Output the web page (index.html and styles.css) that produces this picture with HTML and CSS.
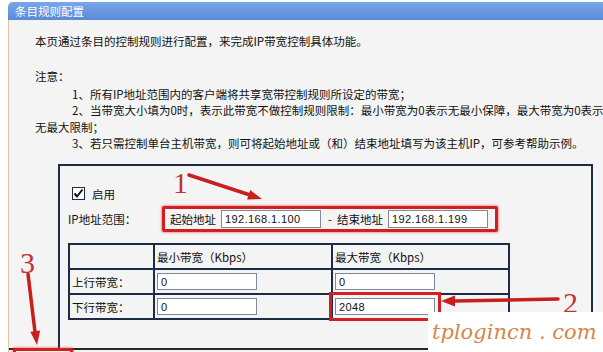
FILE: index.html
```html
<!DOCTYPE html>
<html lang="zh-CN">
<head>
    <meta charset="UTF-8">
    <title>条目规则配置</title>
    <link rel="stylesheet" href="styles.css">
</head>
<body>
    <div class="panel">
        <div class="panel-title">条目规则配置</div>
        <div class="panel-body">
            <p class="intro">本页通过条目的控制规则进行配置，来完成IP带宽控制具体功能。</p>
            <p class="note-title">注意：</p>
            <div class="notes">
                <p class="note-item">1、所有IP地址范围内的客户端将共享宽带控制规则所设定的带宽；</p>
                <p class="note-item">2、当带宽大小填为0时，表示此带宽不做控制规则限制：最小带宽为0表示无最小保障，最大带宽为0表示</p>
                <p class="note-wrap">无最大限制；</p>
                <p class="note-item">3、若只需控制单台主机带宽，则可将起始地址或（和）结束地址填写为该主机IP，可参考帮助示例。</p>
            </div>

            <div class="rule-box">
                <label class="enable">
                    <span class="check">
                        <svg width="11" height="11" viewBox="0 0 11 11"><path d="M1.5 5.5 L4 8.5 L9.5 1.5" fill="none" stroke="#111" stroke-width="2"/></svg>
                    </span>
                    启用
                </label>

                <div class="ip-row">
                    <span class="ip-label">IP地址范围：</span>
                    <span class="range mark">
                        <span>起始地址</span>
                        <input type="text" class="ip-input" value="192.168.1.100">
                        <span class="dash">-</span>
                        <span class="end-label">结束地址</span>
                        <input type="text" class="ip-input" value="192.168.1.199">
                    </span>
                </div>

                <table class="bw-table">
                    <colgroup>
                        <col class="col-name">
                        <col class="col-min">
                        <col class="col-max">
                    </colgroup>
                    <tr>
                        <td></td>
                        <td>最小带宽（Kbps）</td>
                        <td>最大带宽（Kbps）</td>
                    </tr>
                    <tr>
                        <td>上行带宽：</td>
                        <td><input type="text" class="bw-input" value="0"></td>
                        <td><input type="text" class="bw-input" value="0"></td>
                    </tr>
                    <tr>
                        <td>下行带宽：</td>
                        <td><input type="text" class="bw-input" value="0"></td>
                        <td><input type="text" class="bw-input marked" value="2048"></td>
                    </tr>
                </table>
            </div>

            <div class="footer">
                <span class="save-btn mark"></span>
            </div>
        </div>
    </div>

    <!-- 标注：红色数字和箭头 -->
    <svg class="annotations" width="603" height="352" viewBox="0 0 603 352">
        <g class="anno-line">
            <line x1="189" y1="175" x2="250" y2="195"/>
            <line x1="558" y1="299" x2="455" y2="301"/>
            <line x1="28" y1="274" x2="35" y2="332"/>
        </g>
        <g class="anno-head">
            <polygon points="262,199 250.2,190 247.1,199.4"/>
            <polygon points="441,301 455,295.5 455,306.5"/>
            <polygon points="37,345 30.3,331.7 40.2,330.5"/>
        </g>
        <text class="anno-num" x="173" y="193">1</text>
        <text class="anno-num" x="563" y="313">2</text>
        <text class="anno-num" x="20" y="273">3</text>
    </svg>

    <div class="watermark">tplogincn . com</div>
</body>
</html>
```

FILE: styles.css
```css
body {
    margin: 0;
    width: 603px;
    height: 352px;
    overflow: hidden;
    position: relative;
    background-color: #fff;
    color: #111;
    font-family: "Noto Sans CJK SC", "Liberation Sans", sans-serif;
    font-size: 11.5px;
}

p {
    margin: 0;
}

.panel {
    margin-left: 8px;
    padding-top: 2px;
}

.panel-title {
    height: 18px;
    line-height: 19px;
    padding-left: 7px;
    color: #fff;
    background: linear-gradient(#79a7ea, #5a8ad8);
    border-radius: 5px 0 0 0;
}

.panel-body {
    height: 332px;
    overflow: hidden;
    padding-top: 13px;
    padding-left: 26px;
    box-sizing: border-box;
    border-left: 1px solid #e4c29a;
    background-color: #f4f4f4;
}

.intro {
    line-height: 16px;
}

.note-title {
    margin-top: 19px;
    line-height: 16px;
}

.notes {
    margin-top: 2px;
    line-height: 16.3px;
    white-space: nowrap;
}

.note-item {
    padding-left: 37px;
}

.rule-box {
    margin-top: 13px;
    margin-left: 23px;
    width: 535px;
    box-sizing: border-box;
    padding: 21px 0 28px 8px;
    border: 2px solid #1e2b47;
    border-bottom: none;
}

.enable {
    display: flex;
    align-items: center;
    gap: 7px;
    height: 13px;
    margin-left: 4px;
}

.check {
    display: block;
    width: 11px;
    height: 11px;
    border: 1px solid #1c2c4c;
    background-color: #fff;
}

.check svg {
    display: block;
}

.ip-row {
    display: flex;
    align-items: center;
    margin-top: 6px;
}

.ip-label {
    width: 94px;
    flex-shrink: 0;
}

.mark {
    border: 3px solid #d21f1f;
    border-radius: 2px;
    box-shadow: 0 0 2px 1px rgba(220, 60, 60, 0.45);
}

.range {
    display: flex;
    align-items: center;
    flex-shrink: 0;
    height: 20px;
    padding: 0 7px 0 5px;
}

.ip-input {
    flex-shrink: 0;
    width: 100px;
    height: 18px;
    margin-left: 5px;
}

.dash {
    margin-left: 7px;
}

.end-label {
    margin-left: 5px;
}

input[type="text"] {
    box-sizing: border-box;
    padding: 0 0 0 3px;
    border: 1px solid #7c8a9c;
    background-color: #fff;
    color: #111;
    font-family: "Liberation Sans", sans-serif;
    font-size: 11px;
    letter-spacing: 0.4px;
    outline: none;
}

.bw-table {
    margin-top: 11px;
    width: 440px;
    table-layout: fixed;
    border-collapse: collapse;
}

.col-name {
    width: 85px;
}

.col-min {
    width: 178px;
}

.col-max {
    width: 177px;
}

.bw-table td {
    height: 23px;
    padding: 0 0 0 2px;
    border: 2px solid #1e2b47;
    white-space: nowrap;
}

.bw-input {
    display: block;
    width: 100px;
    height: 17px;
}

.bw-input.marked {
    outline: 3px solid #d21f1f;
    outline-offset: 3px;
}

.footer {
    width: 600px;
    margin-left: -26px;
    border-top: 2px solid #2b2620;
    height: 10px;
}

.save-btn {
    display: block;
    width: 54px;
    height: 12px;
    margin-left: 4px;
    margin-top: -2px;
}

.annotations {
    position: absolute;
    top: 0;
    left: 0;
    pointer-events: none;
}

.anno-line line {
    stroke: #c81e1e;
    stroke-width: 3.5;
    stroke-linecap: round;
}

.anno-head polygon {
    fill: #c81e1e;
}

.anno-num {
    fill: #c23434;
    font-family: "Liberation Serif", serif;
    font-size: 30px;
}

.watermark {
    position: absolute;
    right: 0;
    bottom: 0;
    width: 171px;
    height: 40px;
    padding-left: 4px;
    background-color: #fff;
    color: #d4874a;
    font-family: "DejaVu Serif", serif;
    font-style: italic;
    font-size: 21px;
    line-height: 40px;
    white-space: nowrap;
}
```
